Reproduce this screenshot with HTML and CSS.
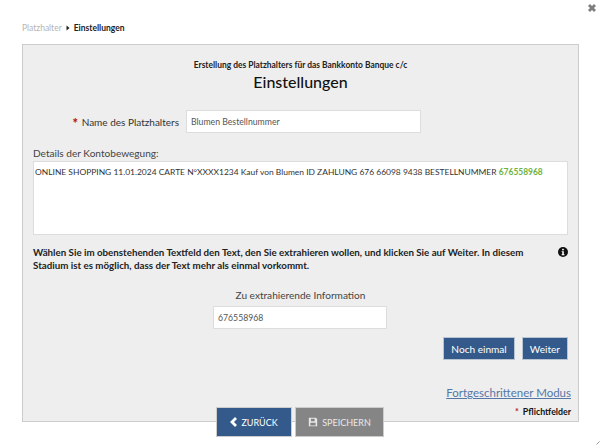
FILE: index.html
```html
<!DOCTYPE html>
<html lang="de">
<head>
<meta charset="utf-8">
<title>Einstellungen</title>
<link rel="stylesheet" href="styles.css">
</head>
<body>
<div class="dialog">
  <div class="close-row">
    <svg class="close" viewBox="0 0 10 10" aria-hidden="true"><path d="M2 2 8 8M8 2 2 8"/></svg>
  </div>
  <nav class="crumbs">
    <span class="crumb-root">Platzhalter</span>
    <svg class="crumb-sep" viewBox="0 0 4 6" aria-hidden="true"><path d="M0.5 0.5 3.5 3 0.5 5.5z"/></svg>
    <span class="crumb-current">Einstellungen</span>
  </nav>
  <main class="panel">
    <header class="head">
      <div class="subtitle">Erstellung des Platzhalters für das Bankkonto Banque c/c</div>
      <h1 class="title">Einstellungen</h1>
    </header>
    <div class="name-row">
      <label class="name-label"><span class="star">*</span> Name des Platzhalters</label>
      <div class="field name-field">Blumen Bestellnummer</div>
    </div>
    <div class="details-label">Details der Kontobewegung:</div>
    <div class="details-box">ONLINE SHOPPING 11.01.2024 CARTE N°XXXX1234 Kauf von Blumen ID ZAHLUNG 676 66098 9438 BESTELLNUMMER <span class="hit">676558968</span></div>
    <div class="hint-row">
      <p class="hint">Wählen Sie im obenstehenden Textfeld den Text, den Sie extrahieren wollen, und klicken Sie auf Weiter. In diesem Stadium ist es möglich, dass der Text mehr als einmal vorkommt.</p>
      <svg class="info" viewBox="0 0 12 12" aria-hidden="true"><circle cx="6" cy="6" r="6"/><rect class="info-g" x="5" y="2.200" width="2" height="1.800"/><path class="info-g" d="M4.300 5h2.700v3.800h.8v1.100H4.300V8.800h.8V6.100h-.8z"/></svg>
    </div>
    <div class="extract">
      <div class="extract-label">Zu extrahierende Information</div>
      <div class="field extract-field">676558968</div>
    </div>
    <div class="actions">
      <button class="btn">Noch einmal</button>
      <button class="btn">Weiter</button>
    </div>
    <div class="advanced"><a class="adv-link" href="#">Fortgeschrittener Modus</a></div>
    <div class="required"><span class="star-small">*</span> Pflichtfelder</div>
  </main>
  <footer class="footer">
    <button class="fbtn back">
      <svg class="chev" viewBox="0 0 8 10" aria-hidden="true"><path d="M6 1 2 5l4 4"/></svg>
      ZURÜCK
    </button>
    <button class="fbtn save">
      <svg class="disk" viewBox="0 0 12 12" aria-hidden="true"><path d="M1 1h8.500L11 2.500V11H1zM3.500 2v3.200h4.500V2zM2.800 7v3.200h6.400V7z" fill-rule="evenodd"/></svg>
      SPEICHERN
    </button>
  </footer>
  <svg class="grip" viewBox="0 0 4 4" aria-hidden="true"><path d="M0.500 3.500 3.500 0.500"/></svg>
</div>
</body>
</html>
```
FILE: styles.css
```css
* { box-sizing: border-box; }
html, body { margin: 0; padding: 0; }
body {
  width: 600px;
  height: 446px;
  overflow: hidden;
  background: #fff;
  font-family: Lato, "Open Sans", sans-serif;
  color: #222;
}
.dialog { padding: 0 21px 0 22px; }
.close-row { height: 20px; display: flex; justify-content: flex-end; margin-right: -18px; padding-top: 3px; }
.close { width: 10px; height: 10px; fill: none; stroke: #7d7d7d; stroke-width: 2.800; }
.crumbs { height: 16px; display: flex; align-items: center; gap: 4px; font-size: 8.500px; }
.crumb-root { color: #b5b5b5; }
.crumb-sep { width: 4px; height: 6px; fill: #222; }
.crumb-current { color: #222; font-weight: 700; }
.panel {
  margin-top: 8px;
  height: 378px;
  background: #eee;
  border: 1px solid #ccc;
  padding: 0 10px;
}
.head { text-align: center; padding-top: 14px; }
.subtitle { font-size: 8.450px; line-height: 12px; font-weight: 700; color: #222; }
.title { margin: -1px 0 0; font-size: 16px; line-height: 24px; font-weight: 500; color: #111; }
.name-row { display: flex; align-items: center; margin-top: 16px; }
.name-label { width: 146px; text-align: right; font-size: 10px; color: #333; white-space: nowrap; }
.star { color: #b5121b; font-weight: 900; font-size: 13px; line-height: 0; margin-right: 1px; vertical-align: -2px; }
.field {
  background: #fff;
  border: 1px solid #ddd;
  font-size: 8.700px;
  color: #555;
  display: flex;
  align-items: center;
  padding-left: 4px;
  height: 23px;
}
.name-field { width: 235px; margin-left: 7px; }
.details-label { margin-top: 13px; font-size: 10.100px; line-height: 14px; color: #444; }
.details-box {
  margin-top: 1px;
  height: 74px;
  background: #fff;
  border: 1px solid #ddd;
  padding: 4px 1px;
  font-size: 8.450px;
  line-height: 12px;
  color: #333;
}
.hit { color: #6db33f; font-weight: 700; }
.hint-row { display: flex; justify-content: space-between; margin-top: 11px; }
.hint { margin: 0; width: 495px; font-size: 9.750px; line-height: 13px; font-weight: 700; color: #222; }
.info { width: 10px; height: 10px; margin: 1px 0 0 0; fill: #111; flex: none; }
.info-g { fill: #fff; }
.extract { display: flex; flex-direction: column; align-items: center; margin-top: 16px; }
.extract-label { font-size: 10.100px; line-height: 14px; color: #444; }
.extract-field { width: 174px; margin-top: 4px; margin-right: 1px; }
.actions { display: flex; justify-content: flex-end; gap: 7px; margin-top: 8px; }
.btn {
  height: 23px;
  padding: 0 7px;
  background: #335a8a;
  border: 1px solid #b8c4d2;
  color: #fff;
  font: 10.100px Lato, sans-serif;
}
.advanced { text-align: right; margin-top: 21px; margin-right: -3px; }
.adv-link { font-size: 11.500px; line-height: 16px; color: #5577a6; }
.required { text-align: right; margin-top: 5px; margin-right: -3px; font-size: 8.800px; line-height: 12px; color: #111; font-weight: 700; }
.star-small { color: #b5121b; font-weight: 700; margin-right: 2px; }
.footer { display: flex; justify-content: center; gap: 3px; margin-top: -15px; padding-right: 1px; position: relative; }
.fbtn {
  height: 30px;
  border: 1px solid #ccc;
  color: #fff;
  font: 9px Lato, sans-serif;
  display: flex;
  align-items: center;
  justify-content: center;
  gap: 3px;
}
.back { width: 76px; background: #335a8a; }
.save { width: 89px; background: #858585; color: #e8e8e8; gap: 4px; }
.chev { width: 8px; height: 10px; fill: none; stroke: #fff; stroke-width: 2.800; }
.disk { width: 10px; height: 10px; fill: #e8e8e8; }
.grip { position: absolute; right: 0; bottom: 1px; width: 4px; height: 4px; fill: none; stroke: #999; stroke-width: 1; }
```
